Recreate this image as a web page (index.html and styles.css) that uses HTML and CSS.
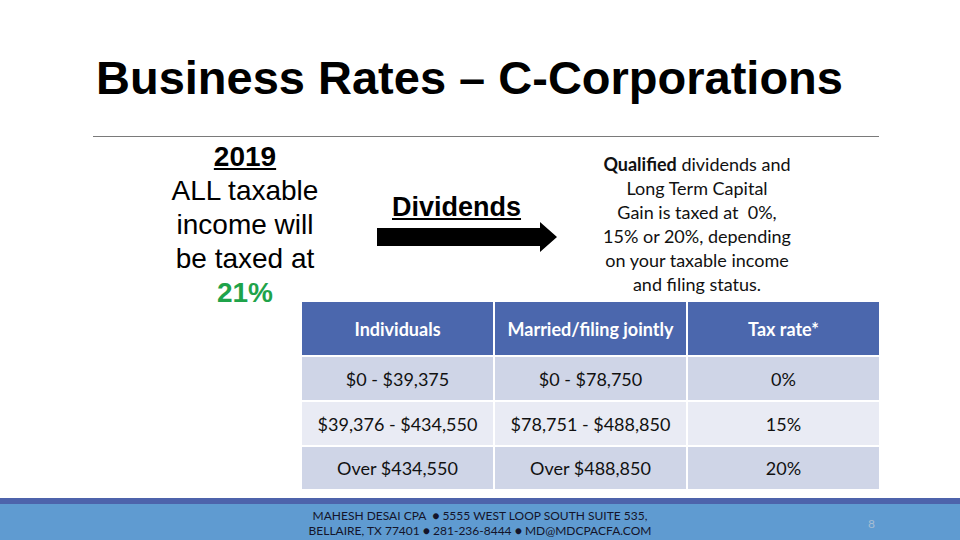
FILE: index.html
```html
<!DOCTYPE html>
<html>
<head>
<meta charset="utf-8">
<link rel="stylesheet" href="styles.css">
</head>
<body>
<div class="slide">
  <h1 class="title">Business Rates – C-Corporations</h1>
  <div class="rule"></div>
  <div class="content">
    <div class="lead">
      <div class="lead-year">2019</div>
      <div>ALL taxable</div>
      <div>income will</div>
      <div>be taxed at</div>
      <div class="lead-rate">21%</div>
    </div>
    <div class="top-right">
      <div class="div-block">
        <div class="div-title">Dividends</div>
        <svg class="arrow" viewBox="0 0 180 30" width="180" height="30">
          <polygon points="0,6 163,6 163,0 180,15 163,30 163,24 0,24" fill="#000"/>
        </svg>
      </div>
      <p class="note"><b>Qualified</b> dividends and<br>Long Term Capital<br>Gain is taxed at&nbsp; 0%,<br>15% or 20%, depending<br>on your taxable income<br>and filing status.</p>
    </div>
    <div class="rates">
      <div class="cell head">Individuals</div>
      <div class="cell head">Married/filing jointly</div>
      <div class="cell head">Tax rate*</div>
      <div class="cell odd">$0 - $39,375</div>
      <div class="cell odd">$0 - $78,750</div>
      <div class="cell odd">0%</div>
      <div class="cell even">$39,376 - $434,550</div>
      <div class="cell even">$78,751 - $488,850</div>
      <div class="cell even">15%</div>
      <div class="cell odd">Over $434,550</div>
      <div class="cell odd">Over $488,850</div>
      <div class="cell odd">20%</div>
    </div>
  </div>
  <footer class="footer">
    <div class="footer-text">MAHESH DESAI CPA &nbsp;● 5555 WEST LOOP SOUTH SUITE 535,<br>BELLAIRE, TX 77401 ● 281-236-8444 ● MD@MDCPACFA.COM</div>
    <div class="page-num">8</div>
  </footer>
</div>
</body>
</html>
```

FILE: styles.css
```css
html, body {
  margin: 0;
  padding: 0;
  background: #fff;
}
.slide {
  width: 960px;
  height: 540px;
  display: flex;
  flex-direction: column;
  overflow: hidden;
  background: #fff;
  font-family: "Liberation Sans", Arial, sans-serif;
  color: #000;
}
.title {
  margin: 54px 0 0 96px;
  font-size: 47px;
  line-height: 47px;
  font-weight: bold;
  white-space: nowrap;
}
.rule {
  margin: 35px 0 0 93px;
  width: 786px;
  height: 1px;
  background: #7a7a7a;
}
.content {
  margin: 3px 0 0 160px;
  display: grid;
  grid-template-columns: 142px 28px 549px;
  grid-template-rows: 162px auto;
}
.lead {
  grid-column: 1 / 3;
  grid-row: 1 / 3;
  text-align: center;
  font-size: 28px;
  line-height: 34px;
}
.lead-year {
  font-weight: bold;
  text-decoration: underline;
}
.lead-rate {
  font-weight: bold;
  color: #1fa34a;
}
.top-right {
  grid-column: 3;
  grid-row: 1;
  display: flex;
  align-items: flex-start;
}
.div-block {
  margin-left: 47px;
  width: 180px;
  padding-top: 50px;
}
.div-title {
  margin-left: 15px;
  font-size: 27px;
  line-height: 34px;
  font-weight: bold;
  text-decoration: underline;
}
.arrow {
  display: block;
  margin-top: -2px;
}
.note {
  margin: 12px 0 0 25px;
  width: 230px;
  font-family: Lato, "Liberation Sans", sans-serif;
  font-size: 18px;
  line-height: 24px;
  text-align: center;
  white-space: nowrap;
  color: #111;
}
.rates {
  grid-column: 2 / 4;
  grid-row: 2;
  display: grid;
  grid-template-columns: repeat(3, 191px);
  grid-template-rows: 53px 43px 43px 42px;
  gap: 2px;
  background: #fff;
  font-family: Lato, "Liberation Sans", sans-serif;
  font-size: 18px;
}
.cell {
  display: flex;
  align-items: center;
  justify-content: center;
  color: #111;
}
.head {
  background: #4b67ad;
  color: #fff;
  font-weight: bold;
}
.odd { background: #cfd5e7; }
.even { background: #e9ebf4; }
.footer {
  margin-top: auto;
  height: 36px;
  border-top: 6px solid #4d63ab;
  background: #5f9bd1;
  display: flex;
  align-items: flex-start;
}
.footer-text {
  margin-left: 290px;
  width: 380px;
  padding-top: 4px;
  text-align: center;
  font-family: Lato, "Liberation Sans", sans-serif;
  font-size: 12px;
  line-height: 15px;
  color: #14142a;
}
.page-num {
  margin: 12px 0 0 198px;
  font-family: Lato, "Liberation Sans", sans-serif;
  font-size: 12px;
  color: #a6bdd3;
}
```
